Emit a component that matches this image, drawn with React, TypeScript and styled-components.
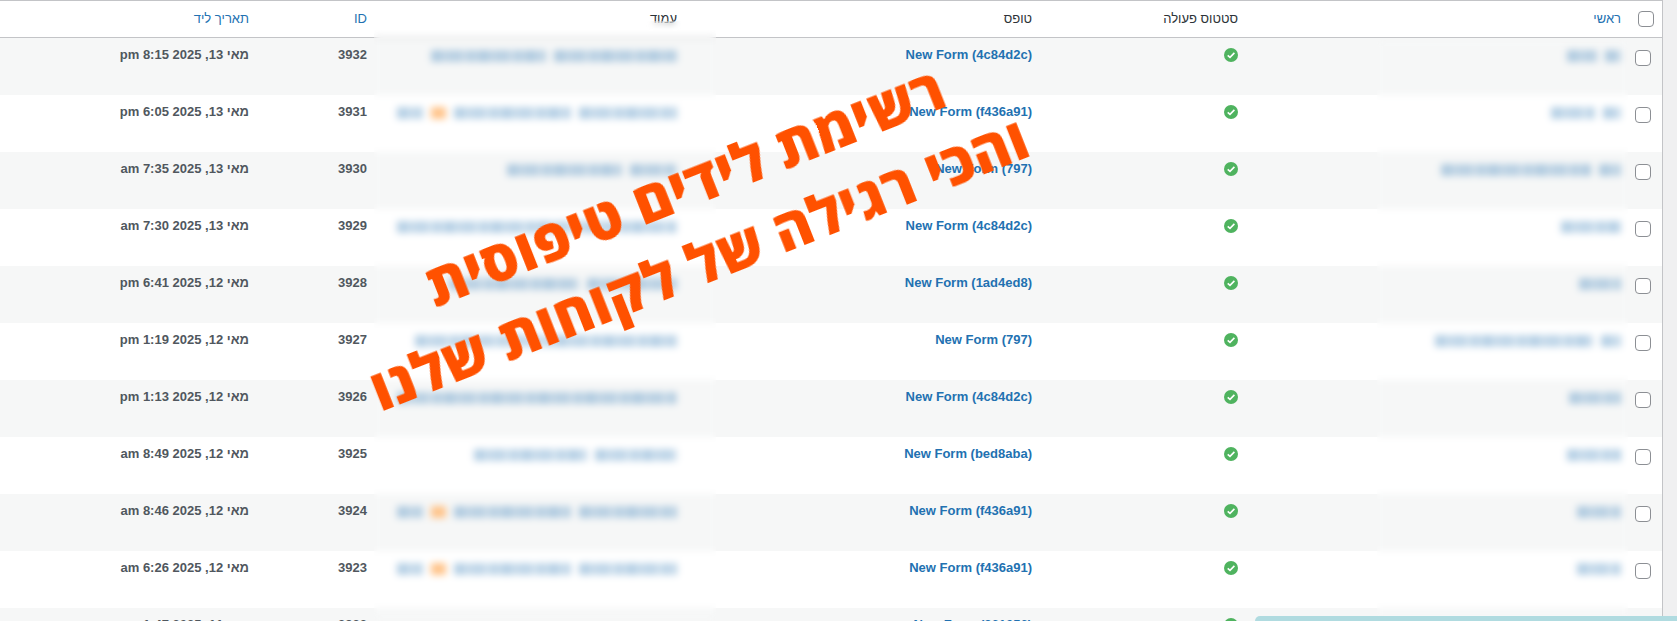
import styled, { createGlobalStyle } from 'styled-components'

const linkColor = '#2271b1'

type Segment = { w: number; mark?: boolean }

type Lead = {
  id: number
  date: string
  form: string
  primary: Segment[]
  page: Segment[]
}

const markedPage: Segment[] = [{ w: 98 }, { w: 117 }, { w: 15, mark: true }, { w: 26 }]

const leads: Lead[] = [
  { id: 3932, date: 'מאי 13, 2025 8:15 pm', form: 'New Form (4c84d2c)', primary: [{ w: 16 }, { w: 30 }], page: [{ w: 123 }, { w: 115 }] },
  { id: 3931, date: 'מאי 13, 2025 6:05 pm', form: 'New Form (f436a91)', primary: [{ w: 18 }, { w: 44 }], page: markedPage },
  { id: 3930, date: 'מאי 13, 2025 7:35 am', form: 'New Form (797)', primary: [{ w: 22 }, { w: 150 }], page: [{ w: 47 }, { w: 115 }] },
  { id: 3929, date: 'מאי 13, 2025 7:30 am', form: 'New Form (4c84d2c)', primary: [{ w: 60 }], page: [{ w: 280 }] },
  { id: 3928, date: 'מאי 12, 2025 6:41 pm', form: 'New Form (1ad4ed8)', primary: [{ w: 42 }], page: [{ w: 90 }, { w: 130 }] },
  { id: 3927, date: 'מאי 12, 2025 1:19 pm', form: 'New Form (797)', primary: [{ w: 20 }, { w: 158 }], page: [{ w: 262 }] },
  { id: 3926, date: 'מאי 12, 2025 1:13 pm', form: 'New Form (4c84d2c)', primary: [{ w: 52 }], page: [{ w: 280 }] },
  { id: 3925, date: 'מאי 12, 2025 8:49 am', form: 'New Form (bed8aba)', primary: [{ w: 54 }], page: [{ w: 82 }, { w: 113 }] },
  { id: 3924, date: 'מאי 12, 2025 8:46 am', form: 'New Form (f436a91)', primary: [{ w: 44 }], page: markedPage },
  { id: 3923, date: 'מאי 12, 2025 6:26 am', form: 'New Form (f436a91)', primary: [{ w: 44 }], page: markedPage },
  { id: 3922, date: 'מאי 11, 2025 1:47 pm', form: 'New Form (861056)', primary: [], page: [] },
]

function StatusIcon() {
  return (
    <StatusSvg viewBox='0 0 14 14'>
      <circle cx='7' cy='7' r='7' fill='#4fb35f' />
      <path d='M3.7 7.3 L6 9.4 L10.4 4.9' fill='none' stroke='#fff' strokeWidth='1.6' />
    </StatusSvg>
  )
}

function App() {
  return (
    <Page>
      <GlobalStyle />
      <Table>
        <colgroup>
          <col width={31} />
          <col width={383} />
          <col width={206} />
          <col width={355} />
          <col width={310} />
          <col width={118} />
          <col width={259} />
        </colgroup>
        <thead>
          <tr>
            <HeadCheckCell>
              <CheckBox type='checkbox' />
            </HeadCheckCell>
            <HeadCell $sortable>ראשי</HeadCell>
            <HeadCell>סטטוס פעולה</HeadCell>
            <HeadCell>טופס</HeadCell>
            <HeadCell>עמוד</HeadCell>
            <HeadCell $sortable>ID</HeadCell>
            <HeadCell $sortable>תאריך ליד</HeadCell>
          </tr>
        </thead>
        <tbody>
          {leads.map((lead) => (
            <Row key={lead.id}>
              <CheckCell>
                <CheckBox type='checkbox' />
              </CheckCell>
              <Cell>
                <Smudge>
                  {lead.primary.map((s, i) => (
                    <SmudgeBar key={i} $w={s.w} />
                  ))}
                </Smudge>
              </Cell>
              <Cell>
                <StatusIcon />
              </Cell>
              <Cell>
                <FormLink>{lead.form}</FormLink>
              </Cell>
              <Cell>
                <Smudge>
                  {lead.page.map((s, i) => (
                    <SmudgeBar key={i} $w={s.w} $mark={s.mark} />
                  ))}
                </Smudge>
              </Cell>
              <StrongCell>{lead.id}</StrongCell>
              <StrongCell>{lead.date}</StrongCell>
            </Row>
          ))}
        </tbody>
      </Table>
      <PageBlur />
      <PageTitleBlur />
      <PrimaryBlur />
      <Headline>
        <HeadlineLine $shift={10}>רשימת לידים טיפוסית</HeadlineLine>
        <HeadlineLine $shift={-5}>והכי רגילה של לקוחות שלנו</HeadlineLine>
      </Headline>
      <ChatBar />
    </Page>
  )
}

const GlobalStyle = createGlobalStyle`
  html, body {
    margin: 0;
    padding: 0;
    background: #f0f0f1;
  }
`

const Page = styled.div`
  position: relative;
  height: 621px;
  overflow: hidden;
  direction: rtl;
  font-family: 'Liberation Sans', Arial, sans-serif;
  font-size: 13px;
  line-height: 18px;
`

const Table = styled.table`
  width: 1662px;
  margin-right: 15px;
  table-layout: fixed;
  border-spacing: 0;
  background: #fff;
  border-top: 1px solid #c3c4c7;
  box-shadow: 1px 0 0 #c3c4c7;
`

const HeadCell = styled.th<{ $sortable?: boolean }>`
  height: 37px;
  padding: 0 10px;
  box-sizing: border-box;
  text-align: right;
  font-weight: 400;
  color: ${(p) => (p.$sortable ? linkColor : '#2c3338')};
  border-bottom: 1px solid #c3c4c7;
`

const HeadCheckCell = styled.th`
  padding: 0 8px 0 0;
  text-align: right;
  border-bottom: 1px solid #c3c4c7;
  font-weight: 400;
`

const Row = styled.tr`
  &:nth-child(odd) {
    background: #f6f7f7;
  }
`

const Cell = styled.td`
  height: 57px;
  box-sizing: border-box;
  padding: 8px 10px;
  vertical-align: top;
  text-align: right;
  color: #50575e;
  white-space: nowrap;
`

const StrongCell = styled(Cell)`
  font-weight: 700;
`

const CheckCell = styled(Cell)`
  padding: 12px 11px 0 0;
`

const CheckBox = styled.input`
  appearance: none;
  display: block;
  width: 16px;
  height: 16px;
  margin: 0;
  background: #fff;
  border: 1px solid #8c8f94;
  border-radius: 4px;
  box-sizing: border-box;
`

const StatusSvg = styled.svg`
  display: block;
  width: 14px;
  height: 14px;
  margin-top: 2px;
`

const FormLink = styled.a`
  color: ${linkColor};
  font-weight: 700;
`

const Smudge = styled.div`
  display: flex;
  gap: 8px;
  height: 20px;
  align-items: center;
`

const SmudgeBar = styled.span<{ $w: number; $mark?: boolean }>`
  display: block;
  flex: none;
  width: ${(p) => p.$w}px;
  height: 12px;
  background: ${(p) =>
    p.$mark
      ? '#ffc48a'
      : `repeating-linear-gradient(90deg, rgba(34, 113, 177, 0.33) 0 11px, rgba(34, 113, 177, 0.24) 11px 17px, rgba(34, 113, 177, 0.29) 17px 31px, rgba(34, 113, 177, 0.2) 31px 37px, rgba(34, 113, 177, 0.32) 37px 43px, rgba(34, 113, 177, 0.21) 43px 47px)`};
`

const PageBlur = styled.div`
  position: absolute;
  left: 374px;
  top: 30px;
  width: 342px;
  bottom: 0;
  backdrop-filter: blur(3.5px);
`

const PageTitleBlur = styled.div`
  position: absolute;
  left: 645px;
  top: 21px;
  width: 36px;
  height: 10px;
  backdrop-filter: blur(3px);
`

const PrimaryBlur = styled.div`
  position: absolute;
  left: 1377px;
  top: 40px;
  width: 251px;
  bottom: 0;
  backdrop-filter: blur(3.5px);
`

const Headline = styled.div`
  position: absolute;
  left: 689px;
  top: 225px;
  transform: translate(-50%, -50%) rotate(-21.5deg);
  color: #ff5100;
  font-family: 'Open Sans', 'Liberation Sans', sans-serif;
  font-size: 58px;
  font-weight: 800;
  line-height: 77px;
  text-align: center;
  white-space: nowrap;
`

const HeadlineLine = styled.div<{ $shift: number }>`
  transform: translateX(${(p) => p.$shift}px);
`

const ChatBar = styled.div`
  position: absolute;
  left: 1255px;
  right: 0;
  top: 616px;
  bottom: 0;
  background: #b0dbe0;
  border-radius: 8px 0 0 0;
`

export default App
